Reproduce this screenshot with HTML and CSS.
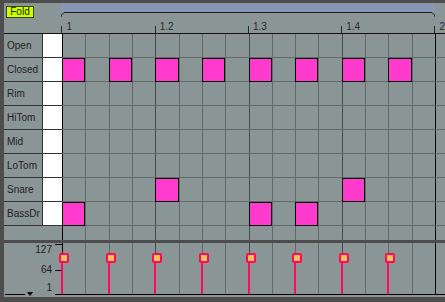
FILE: index.html
```html
<!DOCTYPE html>
<html>
<head>
<meta charset="utf-8">
<link rel="stylesheet" href="styles.css">
</head>
<body>
<div class="app">
  <header class="head">
    <div class="head-left"><button class="fold">Fold</button></div>
    <div class="ruler">
      <svg class="loop" width="374" height="13" viewBox="0 0 374 13">
        <rect x="0" y="0" width="374" height="8.5" fill="#8696b4"/>
        <path d="M0.5 12.5 V11 L3 8.5 H371 L373.5 11 V12.5" fill="none" stroke="#1a1a1a" stroke-width="1"/>
      </svg>
      <div class="beats">
        <div class="beat"><span class="beat-tick"></span><span class="beat-num">1</span></div>
        <div class="beat"><span class="beat-tick"></span><span class="beat-num">1.2</span></div>
        <div class="beat"><span class="beat-tick"></span><span class="beat-num">1.3</span></div>
        <div class="beat"><span class="beat-tick"></span><span class="beat-num">1.4</span></div>
        <div class="beat"><span class="beat-tick"></span><span class="beat-num">2</span></div>
      </div>
    </div>
  </header>

  <div class="main">
    <div class="labels">
      <div class="label">Open</div>
      <div class="label">Closed</div>
      <div class="label">Rim</div>
      <div class="label">HiTom</div>
      <div class="label">Mid</div>
      <div class="label">LoTom</div>
      <div class="label">Snare</div>
      <div class="label">BassDr</div>
    </div>
    <div class="keys">
      <div class="key"></div><div class="key"></div><div class="key"></div><div class="key"></div>
      <div class="key"></div><div class="key"></div><div class="key"></div><div class="key"></div>
    </div>
    <div class="roll">
      <div class="cols">
        <div class="col bar"></div><div class="col"></div><div class="col"></div><div class="col"></div>
        <div class="col beatl"></div><div class="col"></div><div class="col"></div><div class="col"></div>
        <div class="col beatl"></div><div class="col"></div><div class="col"></div><div class="col"></div>
        <div class="col beatl"></div><div class="col"></div><div class="col"></div><div class="col"></div>
        <div class="col bar"></div>
      </div>
      <div class="rows">
        <div class="row-line"></div><div class="row-line"></div><div class="row-line"></div><div class="row-line"></div>
        <div class="row-line"></div><div class="row-line"></div><div class="row-line"></div><div class="row-line"></div>
      </div>
      <div class="note" style="grid-area:2/1"></div>
      <div class="note" style="grid-area:2/3"></div>
      <div class="note" style="grid-area:2/5"></div>
      <div class="note" style="grid-area:2/7"></div>
      <div class="note" style="grid-area:2/9"></div>
      <div class="note" style="grid-area:2/11"></div>
      <div class="note" style="grid-area:2/13"></div>
      <div class="note" style="grid-area:2/15"></div>
      <div class="note" style="grid-area:7/5"></div>
      <div class="note" style="grid-area:7/13"></div>
      <div class="note" style="grid-area:8/1"></div>
      <div class="note" style="grid-area:8/9"></div>
      <div class="note" style="grid-area:8/11"></div>
    </div>
  </div>

  <div class="divider"></div>

  <div class="vel">
    <div class="vel-scale">
      <span class="tick"></span>
      <span class="scale-label top">127</span>
      <div class="scale-row"><span class="scale-num">64</span><span class="tick"></span></div>
      <span class="scale-label low">1</span>
    </div>
    <div class="vel-lane">
      <div class="cols">
        <div class="col bar"></div><div class="col"></div><div class="col"></div><div class="col"></div>
        <div class="col beatl"></div><div class="col"></div><div class="col"></div><div class="col"></div>
        <div class="col beatl"></div><div class="col"></div><div class="col"></div><div class="col"></div>
        <div class="col beatl"></div><div class="col"></div><div class="col"></div><div class="col"></div>
        <div class="col bar"></div>
      </div>
      <div class="stem" style="grid-column:1"></div>
      <div class="stem" style="grid-column:3"></div>
      <div class="stem" style="grid-column:5"></div>
      <div class="stem" style="grid-column:7"></div>
      <div class="stem" style="grid-column:9"></div>
      <div class="stem" style="grid-column:11"></div>
      <div class="stem" style="grid-column:13"></div>
      <div class="stem" style="grid-column:15"></div>
    </div>
  </div>
  <div class="vel-foot">
    <span class="menu-line"></span>
    <span class="menu-caret"></span>
    <span class="foot-line"></span>
  </div>
</div>
</body>
</html>
```

FILE: styles.css
```css
* { box-sizing: border-box; }

html, body {
  margin: 0;
  padding: 0;
}

body {
  background: #4d4d4d;
  width: 445px;
  height: 302px;
  overflow: hidden;
  font-family: "Liberation Sans", Arial, sans-serif;
  font-size: 10px;
  color: #1e1e1e;
}

.app {
  margin: 3px 0 0 4px;
  width: 441px;
  height: 294px;
  background: #8a9595;
  padding-bottom: 2px;
  display: flex;
  flex-direction: column;
}

/* header */
.head {
  display: flex;
  height: 31px;
  flex: none;
  border-bottom: 1px solid #111;
}

.head-left {
  width: 58px;
  padding: 3px 0 0 2px;
}

.fold {
  display: block;
  width: 28px;
  height: 12px;
  padding: 0;
  margin: 0;
  border: 1px solid #3d4a00;
  background: #ccff00;
  font-family: "Liberation Sans", Arial, sans-serif;
  font-size: 10px;
  line-height: 10px;
  color: #1e1e1e;
  text-align: center;
}

.ruler {
  flex: 1;
  display: flex;
  flex-direction: column;
}

.loop {
  display: block;
  margin-top: 1px;
  flex: none;
}

.beats {
  flex: 1;
  display: grid;
  grid-template-columns: repeat(4, 93.25px) 1fr;
  align-items: end;
}

.beat {
  display: flex;
  align-items: flex-end;
}

.beat-tick {
  width: 1px;
  height: 7px;
  background: #2a2a2a;
}

.beat-num {
  margin: 0 0 1px 4px;
  line-height: 10px;
  color: #2a2a2a;
}

/* note area */
.main {
  display: flex;
  height: 206px;
  flex: none;
}

.labels {
  width: 38px;
  flex: none;
}

.label {
  height: 24px;
  line-height: 23px;
  padding-left: 3px;
  border-bottom: 1px solid #333;
  white-space: nowrap;
}

.keys {
  width: 20px;
  flex: none;
}

.key {
  height: 24px;
  background: #fff;
  border-left: 1px solid #333;
  border-bottom: 1px solid #333;
}

.roll {
  flex: 1;
  display: grid;
  grid-template-columns: repeat(16, 23.3125px) 1fr;
  grid-template-rows: repeat(8, 24px) 1fr;
}

.cols {
  grid-area: 1 / 1 / -1 / -1;
  display: grid;
  grid-template-columns: repeat(16, 23.3125px) 1fr;
}

.col {
  border-left: 1px solid #636868;
}

.col.beatl {
  border-left-color: #474b4b;
}

.col.bar {
  border-left-color: #000;
}

.rows {
  grid-area: 1 / 1 / -1 / -1;
  display: grid;
  grid-template-rows: repeat(8, 24px);
}

.row-line {
  border-bottom: 1px solid #636868;
}

.note {
  background: #ff3acc;
  border: 1px solid #000;
}

.divider {
  height: 3px;
  flex: none;
  background: #4d4d4d;
}

/* velocity */
.vel {
  display: flex;
  height: 51px;
  flex: none;
}

.vel-scale {
  width: 58px;
  flex: none;
  display: flex;
  flex-direction: column;
  align-items: flex-end;
  padding-top: 1px;
}

.tick {
  display: block;
  width: 7px;
  height: 1px;
  background: #000;
}

.scale-label {
  line-height: 10px;
  margin-right: 10px;
}

.scale-row {
  display: flex;
  align-items: center;
  height: 10px;
  margin-top: 10px;
}

.scale-num {
  line-height: 10px;
  margin-right: 3px;
}

.scale-label.low {
  margin-top: 8px;
}

.vel-lane {
  flex: 1;
  display: grid;
  grid-template-columns: repeat(16, 23.3125px) 1fr;
  grid-template-rows: 1fr;
}

.stem {
  grid-row: 1;
  align-self: end;
  justify-self: start;
  margin-left: -1px;
  width: 2px;
  height: 38px;
  background: #ff0a5a;
  position: relative;
}

.stem::before {
  content: "";
  position: absolute;
  left: -2px;
  top: -3px;
  width: 6px;
  height: 6px;
  border: 2px solid #ff0a5a;
  border-radius: 2px;
  background: #f2c35a;
}

.vel-foot {
  display: flex;
  height: 1px;
  flex: none;
}

.menu-line {
  margin-left: 1px;
  width: 20px;
  height: 1px;
  background: #000;
}

.menu-caret {
  margin-left: 2px;
  margin-top: -2px;
  width: 0;
  height: 0;
  border-left: 3px solid transparent;
  border-right: 3px solid transparent;
  border-top: 4px solid #000;
}

.foot-line {
  margin-left: auto;
  width: 390px;
  height: 1px;
  background: #000;
}
```
